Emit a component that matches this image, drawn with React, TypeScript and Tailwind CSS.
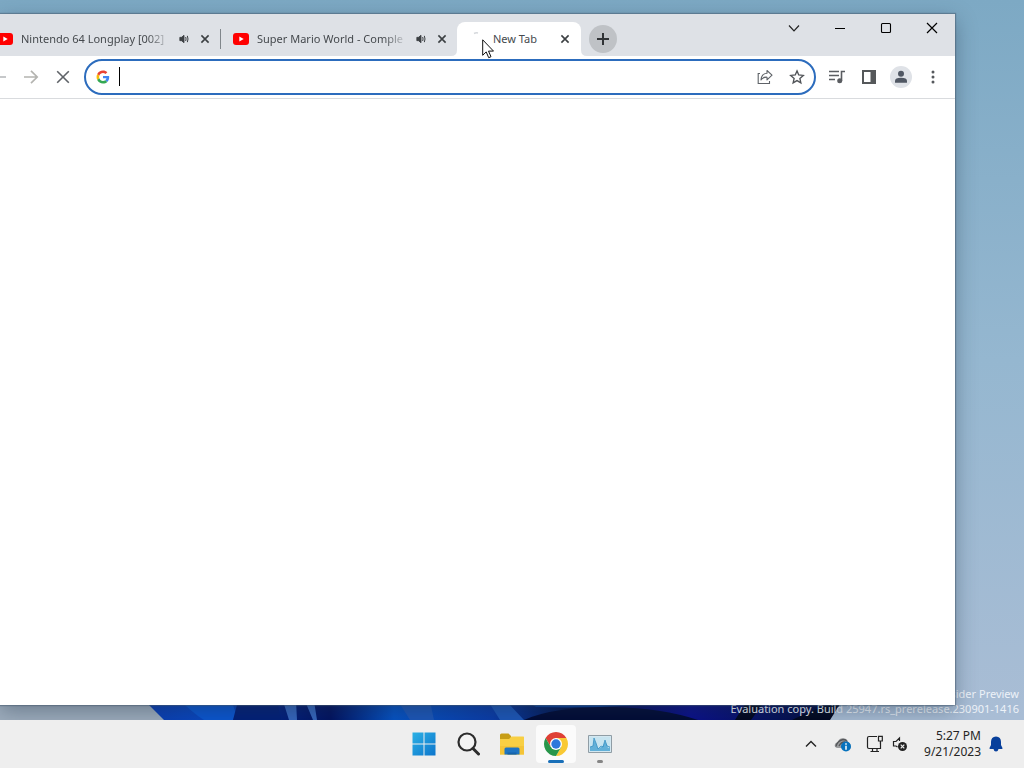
import type { ReactNode } from "react";

const videoTabs = [
  { title: "Nintendo 64 Longplay [002]" },
  { title: "Super Mario World - Comple" },
];

function YoutubeIcon() {
  return (
    <svg width="16" height="16" viewBox="0 0 16 16" className="shrink-0">
      <rect x="0" y="2" width="16" height="12" rx="3" fill="#f00" />
      <path d="M6.3 5.4v5.2L10.7 8z" fill="#fff" />
    </svg>
  );
}

function SpeakerIcon() {
  return (
    <svg width="10" height="10" viewBox="0 0 12 12" className="shrink-0" fill="none" stroke="#3c4043">
      <path d="M1 4h2l3-2.5v9L3 8H1z" fill="#3c4043" />
      <path d="M8 3.6q1 2.4 0 4.8M10 2.2q1.6 3.800 0 7.600" strokeWidth="1.2" />
    </svg>
  );
}

function CloseIcon() {
  return (
    <svg width="16" height="16" viewBox="0 0 16 16" fill="none" stroke="#3c4043" strokeWidth="1.6">
      <path d="M4.4 4.4l7.200 7.200M11.600 4.400l-7.200 7.200" />
    </svg>
  );
}

function GoogleIcon() {
  return (
    <svg width="14" height="14" viewBox="-2 -2 52 52" className="shrink-0">
      <path fill="#EA4335" d="M24 9.5c3.54 0 6.71 1.22 9.21 3.6l6.85-6.85C35.9 2.38 30.47 0 24 0 14.62 0 6.51 5.38 2.56 13.22l7.98 6.19C12.43 13.72 17.74 9.5 24 9.5z" />
      <path fill="#4285F4" d="M46.98 24.55c0-1.57-.15-3.09-.38-4.55H24v9.02h12.94c-.58 2.96-2.26 5.48-4.78 7.18l7.73 6c4.51-4.18 7.09-10.36 7.09-17.65z" />
      <path fill="#FBBC05" d="M10.53 28.59c-.48-1.45-.76-2.99-.76-4.59s.27-3.14.76-4.59l-7.98-6.19C.92 16.46 0 20.12 0 24s.92 7.54 2.56 10.78l7.97-6.19z" />
      <path fill="#34A853" d="M24 48c6.48 0 11.93-2.13 15.89-5.81l-7.73-6c-2.15 1.45-4.92 2.3-8.16 2.3-6.26 0-11.57-4.22-13.47-9.91l-7.98 6.19C6.51 42.62 14.62 48 24 48z" />
    </svg>
  );
}

function IconButton({ label, className = "", children }: { label: string; className?: string; children: ReactNode }) {
  return (
    <button type="button" aria-label={label} className={`flex h-8 w-8 shrink-0 items-center justify-center ${className}`}>
      {children}
    </button>
  );
}

function Wallpaper() {
  return (
    <svg
      viewBox="0 0 1024 24"
      preserveAspectRatio="none"
      className="absolute bottom-0 left-0 h-6 w-full"
    >
      <defs>
        <linearGradient id="bloom">
          <stop offset="0" stopColor="#0b3cb0" />
          <stop offset="0.12" stopColor="#0749c4" />
          <stop offset="0.2" stopColor="#021f7d" />
          <stop offset="0.27" stopColor="#021260" />
          <stop offset="0.36" stopColor="#0552c4" />
          <stop offset="0.5" stopColor="#0a3ba8" />
          <stop offset="0.62" stopColor="#02103c" />
          <stop offset="0.78" stopColor="#0a0f8a" />
          <stop offset="0.9" stopColor="#04105a" />
          <stop offset="1" stopColor="#020a30" />
        </linearGradient>
      </defs>
      <rect width="165" height="24" fill="#9eadbd" />
      <path d="M140 0h706l-18 24H164z" fill="url(#bloom)" />
      <path d="M176 0q15 16 28 24h34l-8-24z" fill="#0a55d0" />
      <path d="M238 5l-5 19h48l-4-19z" fill="#021f78" />
      <path d="M283 5l6 19h8l-1-19zM305 5l8 19h4l-3-19z" fill="#3565bd" />
      <path d="M398 5l12 19h24l-4-19zM488 5l12 19h24l-18-19z" fill="#1c56b8" />
      <path d="M524 24q28-13 88-13 50 1 86 13z" fill="#010a35" />
      <path d="M526 5h160q-70 8-150 6z" fill="#063f9e" />
      <path d="M735 24l12-19h18l-14 19zM792 24q28-14 50-19l-12 19z" fill="#01061f" />
    </svg>
  );
}

function TabStrip() {
  return (
    <div className="flex h-[42px] items-start bg-[#dee1e6]">
      <div className="-ml-[15px] flex h-full items-end">
        {videoTabs.map((tab, index) => (
          <div key={tab.title} className="flex h-[34px] w-[236px] items-center">
            <div className="flex w-full items-center pr-[7px] pl-3">
              <YoutubeIcon />
              <span className="mr-2 ml-2 flex-1 overflow-hidden text-[11px] leading-4 whitespace-nowrap text-[#45494d] [mask-image:linear-gradient(to_right,black_84%,transparent)]">
                {tab.title}
              </span>
              <SpeakerIcon />
              <button type="button" aria-label={`Close ${tab.title}`} className="ml-2"><CloseIcon /></button>
            </div>
            {index === 0 && <span className="h-5 w-px shrink-0 bg-[#80868b]" />}
          </div>
        ))}
        <div className="relative flex h-[34px] w-[124px] items-center rounded-t-lg bg-white pr-2 pl-3">
          <svg width="6" height="6" viewBox="0 0 6 6" fill="#fff" className="absolute bottom-0 -left-[6px]">
            <path d="M6 0v6H0Q6 6 6 0z" />
          </svg>
          <svg width="6" height="6" viewBox="0 0 6 6" fill="#fff" className="absolute -right-[6px] bottom-0">
            <path d="M0 0v6h6Q0 6 0 0z" />
          </svg>
          <svg width="16" height="16" viewBox="0 0 16 16" fill="none">
            <path d="M5 2.5q2-1 4-.5" stroke="#d5d8dc" strokeWidth="1.5" />
          </svg>
          <span className="ml-2 flex-1 text-[11px] leading-4 text-[#45494d]">New Tab</span>
          <button type="button" aria-label="Close New Tab"><CloseIcon /></button>
        </div>
        <button
          type="button"
          aria-label="Open new tab"
          className="mb-[3px] ml-2 flex h-7 w-7 items-center justify-center rounded-full bg-[#bfc2c6]"
        >
          <svg width="14" height="14" viewBox="0 0 14 14" stroke="#303336" strokeWidth="2">
            <path d="M7 1v12M1 7h12" />
          </svg>
        </button>
      </div>
      <div className="ml-auto flex h-7 items-center">
        <button type="button" aria-label="Search tabs" className="flex w-[46px] justify-center">
          <svg width="12" height="12" viewBox="0 0 12 12" fill="none" stroke="#222" strokeWidth="1.2">
            <path d="M1 3.500l5 5.300 5-5.300" />
          </svg>
        </button>
        <button type="button" aria-label="Minimize" className="flex w-[46px] justify-center">
          <svg width="12" height="12" viewBox="0 0 12 12" stroke="#000">
            <path d="M1 6.500h10" />
          </svg>
        </button>
        <button type="button" aria-label="Maximize" className="flex w-[46px] justify-center">
          <svg width="12" height="12" viewBox="0 0 12 12" fill="none" stroke="#000" strokeWidth="1.1">
            <rect x="1.500" y="1.500" width="9" height="9" rx="1" />
          </svg>
        </button>
        <button type="button" aria-label="Close window" className="flex w-[46px] justify-center">
          <svg width="12" height="12" viewBox="0 0 12 12" stroke="#000" strokeWidth="1.2">
            <path d="M1 1l10 10M11 1L1 11" />
          </svg>
        </button>
      </div>
    </div>
  );
}

function Toolbar() {
  return (
    <div className="flex h-[43px] items-center border-b border-[#d9dbde] bg-white pr-[6px]">
      <IconButton label="Back" className="-ml-[17px]">
        <svg width="16" height="16" viewBox="0 0 16 16" fill="none" stroke="#b4b6b9" strokeWidth="1.7">
          <path d="M15 8H2M8 2L2 8l6 6" />
        </svg>
      </IconButton>
      <IconButton label="Forward">
        <svg width="16" height="16" viewBox="0 0 16 16" fill="none" stroke="#b4b4b0" strokeWidth="1.7">
          <path d="M1 8h13M8 1.800L14.200 8 8 14.200" />
        </svg>
      </IconButton>
      <IconButton label="Stop loading">
        <svg width="16" height="16" viewBox="0 0 16 16" stroke="#5f6368" strokeWidth="1.6">
          <path d="M2.200 2.200l11.600 11.600M13.800 2.200L2.200 13.800" />
        </svg>
      </IconButton>
      <div className="ml-[5px] flex h-9 flex-1 items-center rounded-full border-2 border-[#2c6cbd] bg-white pr-[1px] pl-[10px]">
        <GoogleIcon />
        <span className="mb-[2px] ml-[9px] h-[19px] w-px bg-black" />
        <input type="text" aria-label="Address and search bar" className="min-w-0 flex-1 text-sm outline-none" />
        <IconButton label="Share this page">
          <svg width="16" height="16" viewBox="0 0 16 16" fill="none" stroke="#5f6368" strokeWidth="1.1">
            <path d="M3 4.500H1.200v10h11.300v-2.500" />
            <path d="M10 1.500l5 4.700-5 4.700V8.200Q6 7.900 4 11 4.400 4.800 10 4.300z" strokeLinejoin="round" />
          </svg>
        </IconButton>
        <IconButton label="Bookmark this tab">
          <svg width="16" height="16" viewBox="0 0 24 24" fill="none" stroke="#505357" strokeWidth="2">
            <path d="M12 2.800l2.600 6.100 6.900.7-5.200 4.600 1.500 6.600L12 17.400l-5.800 3.400 1.500-6.600-5.200-4.600 6.900-.7z" />
          </svg>
        </IconButton>
      </div>
      <IconButton label="Media controls" className="ml-[5px]">
        <svg width="18" height="16" viewBox="0 0 18 16" fill="none" stroke="#5a5d61" strokeWidth="1.6">
          <path d="M1 2.500h10M1 6.500h10M1 10.500h6M13.500 12V2.500H17" />
          <circle cx="11.700" cy="11.800" r="1.700" fill="#5a5d61" />
        </svg>
      </IconButton>
      <IconButton label="Side panel">
        <svg width="14" height="14" viewBox="0 0 14 14">
          <path d="M0 0h14v14H0z" fill="#55585a" />
          <path d="M2 2h6.500v10H2z" fill="#fff" />
        </svg>
      </IconButton>
      <IconButton label="Profile">
        <svg width="22" height="22" viewBox="0 0 22 22">
          <circle cx="11" cy="11" r="11" fill="#dfe2e7" />
          <g fill="#505763">
            <circle cx="11" cy="7.700" r="3" />
            <path d="M5 16.800V15q0-3.200 6-3.200t6 3.200v1.800z" />
          </g>
        </svg>
      </IconButton>
      <IconButton label="Menu">
        <svg width="4" height="16" viewBox="0 0 4 16" fill="#55585c">
          <circle cx="2" cy="3" r="1.500" />
          <circle cx="2" cy="8" r="1.500" />
          <circle cx="2" cy="13" r="1.500" />
        </svg>
      </IconButton>
    </div>
  );
}

function TaskbarApp({ label, active = false, children }: { label: string; active?: boolean; children: ReactNode }) {
  return (
    <button
      type="button"
      aria-label={label}
      className={`relative mx-[2px] flex h-[38px] w-10 items-center justify-center rounded ${active ? "bg-[#fbfbfb]" : ""}`}
    >
      {children}
    </button>
  );
}

function Taskbar() {
  return (
    <footer className="grid h-12 shrink-0 grid-cols-[1fr_auto_1fr] items-center bg-[#eeeeee]">
      <div className="col-start-2 flex">
        <TaskbarApp label="Start">
          <svg width="24" height="24" viewBox="0 0 24 24">
            <defs>
              <linearGradient id="win" x2="1" y2="1">
                <stop stopColor="#2cb1e5" />
                <stop offset="1" stopColor="#0c75cc" />
              </linearGradient>
            </defs>
            <path d="M.5.5h11v11H.5zM12.500.5h11v11h-11zM.5 12.500h11v11H.5zM12.500 12.500h11v11h-11z" fill="url(#win)" />
          </svg>
        </TaskbarApp>
        <TaskbarApp label="Search">
          <svg width="24" height="24" viewBox="0 0 24 24" fill="none">
            <circle cx="11" cy="10" r="8.500" fill="#f3f3f3" stroke="#2c2c2c" strokeWidth="2.200" />
            <path d="M17 16.500l5.500 5.500" stroke="#2c2c2c" strokeWidth="3" strokeLinecap="round" />
          </svg>
        </TaskbarApp>
        <TaskbarApp label="File Explorer">
          <svg width="24" height="24" viewBox="0 0 24 24">
            <path d="M0 3q0-1.500 1.500-1.500h7L11 4v5H0z" fill="#c79d16" />
            <path d="M0 7h9l2.500-2.500H23q1.500 0 1.500 1.500v16.500H0z" fill="#f8cf43" />
            <path d="M0 14h24v8.500H0z" fill="#f4c437" />
            <path d="M4.500 22.500V17q0-1.500 1.500-1.500h12q1.500 0 1.500 1.500v5.500z" fill="#1d74c2" />
            <path d="M7.500 20.500h9v2h-9z" fill="#1463ac" />
          </svg>
        </TaskbarApp>
        <TaskbarApp label="Google Chrome" active>
          <svg width="24" height="24" viewBox="0 0 24 24">
            <path d="M12 6h10.392A12 12 0 0 1 12 24l5.200-9z" fill="#f9c934" />
            <path d="M1.608 6A12 12 0 0 1 22.392 6H12L6.800 15z" fill="#df4035" />
            <path d="M12 24A12 12 0 0 1 1.608 6L6.800 15h10.400z" fill="#28964a" />
            <circle cx="12" cy="12" r="6" fill="#fff" />
            <circle cx="12" cy="12" r="4.700" fill="#2e77dc" />
          </svg>
          <span className="absolute bottom-0 left-3 h-[3px] w-4 rounded-full bg-[#196fb8]" />
        </TaskbarApp>
        <TaskbarApp label="Task Manager">
          <svg width="24" height="24" viewBox="0 0 24 24">
            <path d="M.5 3.500h23v17H.5z" fill="#d4e8f1" stroke="#909da5" />
            <path d="M2 5h20v14H2z" fill="#c7e4f0" />
            <path d="M2 19v-4l3-1 1-7 2 4 2 6 3-2 2-1 2-5 2 4 1 3 2-1v4z" fill="#62b0d8" />
            <path d="M2 15l3-1 1-8 2 5 2 6 3-3 2 1 2-7 2 6 3 1" fill="none" stroke="#2a88be" strokeWidth=".7" />
          </svg>
          <span className="absolute bottom-0 left-[17px] h-[3px] w-[6px] rounded-full bg-[#858585]" />
        </TaskbarApp>
      </div>
      <div className="flex items-center justify-end pr-[21px]">
        <button type="button" aria-label="Show hidden icons" className="mr-4">
          <svg width="14" height="14" viewBox="0 0 14 14" fill="none" stroke="#222" strokeWidth="1.400">
            <path d="M2 9.500l5-5 5 5" />
          </svg>
        </button>
        <button type="button" aria-label="OneDrive" className="mr-[14px]">
          <svg width="18" height="16" viewBox="0 0 18 16">
            <path d="M3.500 12q-3-.5-2.800-3Q1 6.500 4 6q1-4 5-3.700Q13 2.200 14 6q3 1 2.500 6z" fill="#9a9c9f" />
            <path d="M2 10.500Q3 5 9 3.500q3 0 4 2M5 10q2-4 6-4" fill="none" stroke="#55575a" strokeWidth="1.300" />
            <circle cx="12" cy="10.500" r="5" fill="#0672bd" />
            <path d="M12 7.200v1.500M12 9.700v4" stroke="#fff" strokeWidth="1.500" />
          </svg>
        </button>
        <button type="button" aria-label="Network" className="mr-2">
          <svg width="18" height="18" viewBox="0 0 18 18" fill="none" stroke="#222" strokeWidth="1.200">
            <path d="M11 1.500H3Q1.500 1.500 1.500 3v9q0 1.500 1.500 1.500h11.500V7M6.500 13.500v3M11 13.500v3M4.500 16.500h8.500M12.500 1.300h3.800V6h-3.800zM14.400 6v3" />
          </svg>
        </button>
        <button type="button" aria-label="Volume" className="mr-4">
          <svg width="16" height="16" viewBox="0 0 16 16" fill="none">
            <path d="M5.500 11L4 10H1.500V5.500H4L7.500 2v3" stroke="#222" strokeWidth="1.200" />
            <circle cx="10.500" cy="10.500" r="4.500" fill="#222" />
            <path d="M8.700 8.700l3.600 3.600M12.300 8.700l-3.600 3.600" stroke="#eee" strokeWidth="1.200" />
          </svg>
        </button>
        <button type="button" className="text-right text-xs text-[#252525]">
          5:27 PM
          <br />
          9/21/2023
        </button>
        <button type="button" aria-label="Notifications" className="ml-2">
          <svg width="14" height="16" viewBox="0 0 14 16" fill="#073f9b">
            <path d="M7 .5q5 .3 5 5.500v3l1.500 3q.3 1-.8 1H1.300Q.2 13 .5 12L2 9V6Q2 .8 7 .5z" />
            <path d="M4.500 13h5Q9 15.500 7 15.500T4.500 13z" />
          </svg>
        </button>
      </div>
    </footer>
  );
}

export default function App() {
  return (
    <div className="flex h-screen flex-col overflow-hidden font-['Noto_Sans','Open_Sans',sans-serif]">
      <main className="relative flex min-h-0 flex-1 flex-col overflow-hidden bg-linear-to-b from-[#7da9c4] via-[#95b7d0] to-[#a9bdd5] pt-[14px] pr-[69px] pb-[15px]">
        <Wallpaper />
        <p className="absolute right-[5px] bottom-1 text-right text-[11px] leading-[15px] text-[#edf2f8]">
          Insider Preview
          <br />
          Evaluation copy. Build 25947.rs_prerelease.230901-1416
        </p>
        <section
          aria-label="Google Chrome"
          className="relative flex min-h-0 flex-1 flex-col bg-white shadow-[0_0_1px_1px_rgba(70,90,110,0.5),0_6px_20px_rgba(30,50,70,0.4)]"
        >
          <TabStrip />
          <Toolbar />
        </section>
        <svg width="12" height="20" viewBox="0 0 12 20" className="absolute top-[39px] left-[482px]">
          <path d="M.7.8v15.500l3.500-3.400 2.500 5.800 2.300-1-2.500-5.600h5z" fill="#fff" stroke="#111" />
        </svg>
      </main>
      <Taskbar />
    </div>
  );
}
